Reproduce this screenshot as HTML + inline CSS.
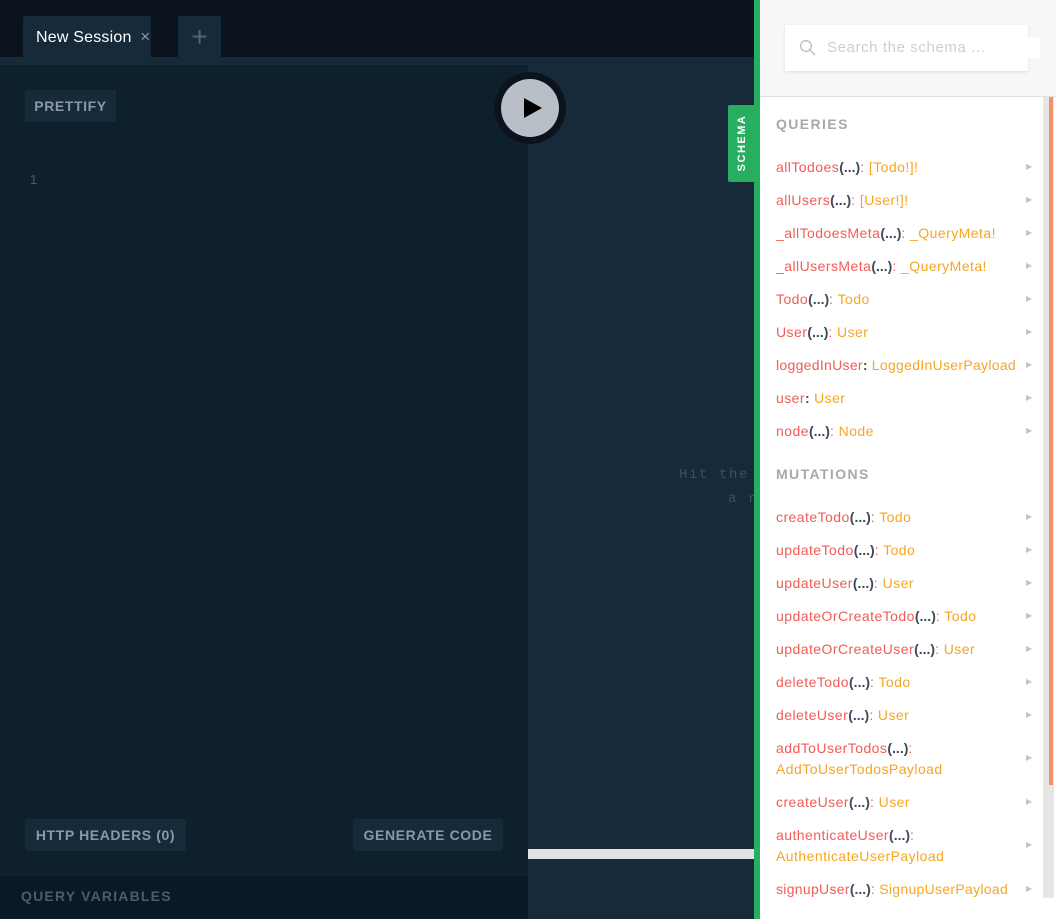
<!DOCTYPE html>
<html><head><meta charset="utf-8"><style>
*{margin:0;padding:0;box-sizing:border-box}
body{width:1056px;height:919px;overflow:hidden;position:relative;background:#172a3a;font-family:"Liberation Sans",sans-serif}
.a{position:absolute}
.btn{position:absolute;background:#172a3a;color:#8b99a6;font-weight:bold;font-size:14px;letter-spacing:.6px;border-radius:2px;display:flex;align-items:center;justify-content:center}
.row{position:absolute;left:776px;font-size:14px;color:#f25c54;white-space:nowrap;line-height:21px;letter-spacing:.45px}
.row .p{color:#3d4a5c;font-weight:bold;letter-spacing:0}
.row .t{color:#f5a623}
.arr{position:absolute;left:1026px;font-size:8px;color:#c4c4c4}
.h{position:absolute;left:776px;font-size:14px;font-weight:bold;color:#a8a8a8;letter-spacing:1.4px}
</style></head><body>
<div class="a" style="left:0;top:0;width:760px;height:57px;background:#0b141d"></div>
<div class="a" style="left:23px;top:16px;width:128px;height:41px;background:#172a3a;border-radius:2px 2px 0 0;color:#fff;font-size:16px;line-height:42px;padding-left:13px;letter-spacing:.2px">New Session <span style="color:#8b99a6;margin-left:4px;font-size:17px">×</span></div>
<div class="a" style="left:178px;top:16px;width:43px;height:43px;background:#172a3a;border-radius:2px;color:#56646f;font-size:28px;text-align:center;line-height:41px">+</div>
<div class="a" style="left:0;top:65px;width:528px;height:811px;background:#0f202d"></div>
<div class="btn" style="left:25px;top:90px;width:91px;height:32px">PRETTIFY</div>
<div class="a" style="left:30px;top:172px;font-size:13px;color:#4b5a66">1</div>
<div class="btn" style="left:25px;top:819px;width:161px;height:32px">HTTP HEADERS (0)</div>
<div class="btn" style="left:353px;top:819px;width:150px;height:32px">GENERATE CODE</div>
<div class="a" style="left:0;top:876px;width:528px;height:43px;background:#0b1924"></div>
<div class="a" style="left:21px;top:888px;font-size:14px;font-weight:bold;color:#4d5c68;letter-spacing:1.2px">QUERY VARIABLES</div>
<div class="a" style="left:494px;top:72px;width:72px;height:72px;border-radius:50%;background:#0b141d"></div>
<div class="a" style="left:501px;top:79px;width:58px;height:58px;border-radius:50%;background:#b9bfc7"></div>
<svg class="a" style="left:522px;top:96px" width="22" height="24"><path d="M2 2 L20 12 L2 22 Z" fill="#000"/></svg>
<div class="a" style="left:679px;top:467px;font-family:'Liberation Mono',monospace;font-size:14px;color:#3f4f5c;letter-spacing:1.6px">Hit the P</div>
<div class="a" style="left:728px;top:491px;font-family:'Liberation Mono',monospace;font-size:14px;color:#3f4f5c;letter-spacing:1.6px">a r</div>
<div class="a" style="left:528px;top:849px;width:226px;height:10px;background:#e2e2e2"></div>
<div class="a" style="left:728px;top:105px;width:28px;height:77px;background:#27ae60;border-radius:2px 0 0 2px"></div>
<div class="a" style="left:742px;top:143px;transform:translate(-50%,-50%) rotate(-90deg);color:#fff;font-size:11px;font-weight:bold;letter-spacing:1.5px">SCHEMA</div>
<div class="a" style="left:754px;top:0;width:6px;height:919px;background:#27ae60"></div>
<div class="a" style="left:760px;top:97px;width:296px;height:822px;background:#fff"></div>
<div class="a" style="left:760px;top:0;width:296px;height:97px;background:#f7f7f7;border-bottom:1px solid #e0e0e0"></div>
<div class="a" style="left:785px;top:25px;width:243px;height:46px;background:#fff;box-shadow:0 1px 3px rgba(0,0,0,.1)"></div>
<div class="a" style="left:1028px;top:37px;width:12px;height:21px;background:#fff"></div>
<svg class="a" style="left:799px;top:39px" width="18" height="18"><circle cx="7" cy="7" r="5.3" fill="none" stroke="#bbb" stroke-width="1.3"/><path d="M11 11 L16 16" stroke="#bbb" stroke-width="1.3"/></svg>
<div class="a" style="left:827px;top:39px;font-size:15px;color:#cfcfcf;letter-spacing:.6px">Search the schema ...</div>
<div class="a" style="left:1043px;top:97px;width:11px;height:801px;background:#e6e6e6"></div>
<div class="a" style="left:1049px;top:97px;width:4px;height:688px;background:#f0926a"></div>
<div class="h" style="top:116px">QUERIES</div>
<div class="h" style="top:466px">MUTATIONS</div>
<div class="row" style="top:157px">allTodoes<span class="p">(...)</span>: <span class="t">[Todo!]!</span></div><div class="arr" style="top:162px">▶</div>
<div class="row" style="top:190px">allUsers<span class="p">(...)</span>: <span class="t">[User!]!</span></div><div class="arr" style="top:195px">▶</div>
<div class="row" style="top:223px">_allTodoesMeta<span class="p">(...)</span>: <span class="t">_QueryMeta!</span></div><div class="arr" style="top:228px">▶</div>
<div class="row" style="top:256px">_allUsersMeta<span class="p">(...)</span>: <span class="t">_QueryMeta!</span></div><div class="arr" style="top:261px">▶</div>
<div class="row" style="top:289px">Todo<span class="p">(...)</span>: <span class="t">Todo</span></div><div class="arr" style="top:294px">▶</div>
<div class="row" style="top:322px">User<span class="p">(...)</span>: <span class="t">User</span></div><div class="arr" style="top:327px">▶</div>
<div class="row" style="top:355px;letter-spacing:.3px">loggedInUser<span class="p">:</span> <span class="t">LoggedInUserPayload</span></div><div class="arr" style="top:360px">▶</div>
<div class="row" style="top:388px">user<span class="p">:</span> <span class="t">User</span></div><div class="arr" style="top:393px">▶</div>
<div class="row" style="top:421px">node<span class="p">(...)</span>: <span class="t">Node</span></div><div class="arr" style="top:426px">▶</div>
<div class="row" style="top:507px">createTodo<span class="p">(...)</span>: <span class="t">Todo</span></div><div class="arr" style="top:512px">▶</div>
<div class="row" style="top:540px">updateTodo<span class="p">(...)</span>: <span class="t">Todo</span></div><div class="arr" style="top:545px">▶</div>
<div class="row" style="top:573px">updateUser<span class="p">(...)</span>: <span class="t">User</span></div><div class="arr" style="top:578px">▶</div>
<div class="row" style="top:606px">updateOrCreateTodo<span class="p">(...)</span>: <span class="t">Todo</span></div><div class="arr" style="top:611px">▶</div>
<div class="row" style="top:639px">updateOrCreateUser<span class="p">(...)</span>: <span class="t">User</span></div><div class="arr" style="top:644px">▶</div>
<div class="row" style="top:672px">deleteTodo<span class="p">(...)</span>: <span class="t">Todo</span></div><div class="arr" style="top:677px">▶</div>
<div class="row" style="top:705px">deleteUser<span class="p">(...)</span>: <span class="t">User</span></div><div class="arr" style="top:710px">▶</div>
<div class="row" style="top:738px">addToUserTodos<span class="p">(...)</span>:<br><span class="t">AddToUserTodosPayload</span></div><div class="arr" style="top:753px">▶</div>
<div class="row" style="top:792px">createUser<span class="p">(...)</span>: <span class="t">User</span></div><div class="arr" style="top:797px">▶</div>
<div class="row" style="top:825px">authenticateUser<span class="p">(...)</span>:<br><span class="t">AuthenticateUserPayload</span></div><div class="arr" style="top:840px">▶</div>
<div class="row" style="top:879px;letter-spacing:.3px">signupUser<span class="p">(...)</span>: <span class="t">SignupUserPayload</span></div><div class="arr" style="top:884px">▶</div>
</body></html>
